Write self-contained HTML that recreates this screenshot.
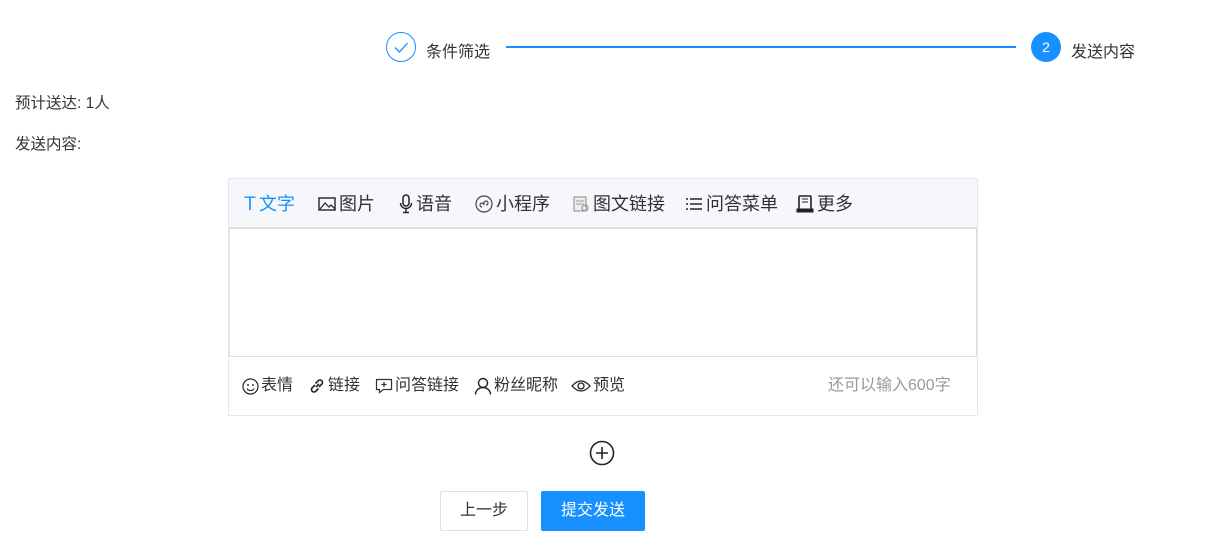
<!DOCTYPE html>
<html><head><meta charset="utf-8"><style>
*{margin:0;padding:0;box-sizing:border-box}
body{width:1212px;height:542px;background:#fff;font-family:"Liberation Sans","Noto Sans CJK SC",sans-serif;color:#333;position:relative;overflow:hidden;font-size:14px}
.a{position:absolute;white-space:nowrap}
.tb span{position:absolute;top:0;height:50px;line-height:50px;font-size:18px;color:#303133;display:flex;align-items:center;gap:3px}
.ft span{position:absolute;top:0;height:58px;line-height:58px;font-size:16px;color:#303133;display:flex;align-items:center;gap:2px}
</style></head><body>
<div class="a" style="left:386px;top:32px;width:30px;height:30px;border:1px solid #1890ff;border-radius:50%"></div>
<svg class="a" style="left:386px;top:32px" width="30" height="30"><path d="M9 15.5l4.5 4.5 8-9" fill="none" stroke="#1890ff" stroke-width="1.3"/></svg>
<div class="a" style="left:426px;top:38px;font-size:16px;color:#333">条件筛选</div>
<div class="a" style="left:506px;top:46px;width:510px;height:2px;background:#1890ff"></div>
<div class="a" style="left:1031px;top:32px;width:30px;height:30px;background:#1890ff;border-radius:50%;color:#fff;text-align:center;line-height:30px;font-size:14px">2</div>
<div class="a" style="left:1071px;top:38px;font-size:16px;color:#333">发送内容</div>
<div class="a" style="left:15px;top:91px;font-size:15.5px">预计送达: 1人</div>
<div class="a" style="left:15px;top:132px;font-size:15.5px">发送内容:</div>

<div class="a" style="left:228px;top:178px;width:750px;height:238px;border:1px solid #e4e7ed"></div>
<div class="a tb" style="left:229px;top:179px;width:748px;height:49px;background:#f5f7fa;border-bottom:1px solid #dcdfe6">
<span style="left:12px;color:#1890ff">Ｔ文字</span>
<span style="left:89px"><svg width="18" height="16"><rect x="1" y="2" width="16" height="12" fill="none" stroke="#222" stroke-width="1.4"/><path d="M2 13l5-6 4 4 2-2 4 4" fill="none" stroke="#222" stroke-width="1.2"/></svg>图片</span>
<span style="left:170px"><svg width="14" height="20"><rect x="4" y="1" width="6" height="11" rx="3" fill="none" stroke="#222" stroke-width="1.5"/><path d="M1.5 9a5.5 5.5 0 0 0 11 0M7 14.5v4M4 18.5h6" fill="none" stroke="#222" stroke-width="1.4"/></svg>语音</span>
<span style="left:246px"><svg width="18" height="18"><circle cx="9" cy="9" r="8" fill="none" stroke="#444" stroke-width="1.2"/><path d="M7 12a2 2 0 1 1 2-2v-2a2 2 0 1 1 2 2" fill="none" stroke="#444" stroke-width="1.2"/></svg>小程序</span>
<span style="left:343px"><svg width="18" height="18"><rect x="2" y="2" width="12" height="14" fill="#eee" stroke="#888"/><path d="M4 6h8M4 9h8" stroke="#999"/><circle cx="13" cy="13" r="3" fill="none" stroke="#888"/></svg>图文链接</span>
<span style="left:456px"><svg width="18" height="16"><path d="M1 3h2M1 8h2M1 13h2M5 3h12M5 8h12M5 13h12" stroke="#222" stroke-width="1.4"/></svg>问答菜单</span>
<span style="left:567px"><svg width="18" height="18"><rect x="3" y="1" width="12" height="14" rx="1" fill="none" stroke="#222" stroke-width="1.6"/><path d="M6 4h6M6 7h6M1 14h16v3H1z" fill="#222" stroke="#222"/></svg>更多</span>
</div>
<div class="a" style="left:229px;top:228px;width:748px;height:129px;border:1px solid #dcdfe6"></div>
<div class="a ft" style="left:229px;top:357px;width:748px;height:58px">
<span style="left:13px"><svg width="17" height="17"><circle cx="8.5" cy="8.5" r="7.5" fill="none" stroke="#222" stroke-width="1.2"/><circle cx="6" cy="7" r=".9"/><circle cx="11" cy="7" r=".9"/><path d="M5 10.5a4 4 0 0 0 7 0" fill="none" stroke="#222" stroke-width="1.2"/></svg>表情</span>
<span style="left:79px"><svg width="18" height="18"><path d="M8 10l3-3M7 8l-3 3a2.5 2.5 0 0 0 3.5 3.5l3-3M11 10l3-3a2.5 2.5 0 0 0-3.5-3.5l-3 3" fill="none" stroke="#222" stroke-width="1.6"/></svg>链接</span>
<span style="left:146px"><svg width="18" height="18"><path d="M1.5 2.5h15v10h-8l-4 3v-3h-3z" fill="none" stroke="#333" stroke-width="1.2"/><path d="M9 5v5M6.5 7.5h5" stroke="#333" stroke-width="1.2"/></svg>问答链接</span>
<span style="left:245px"><svg width="18" height="18"><circle cx="9" cy="6" r="4.5" fill="none" stroke="#222" stroke-width="1.4"/><path d="M1.5 17.5a7.5 7 0 0 1 15 0" fill="none" stroke="#222" stroke-width="1.4"/></svg>粉丝昵称</span>
<span style="left:342px"><svg width="20" height="16"><path d="M1 8q9-10 18 0q-9 10-18 0z" fill="none" stroke="#222" stroke-width="1.3"/><circle cx="10" cy="8" r="3" fill="none" stroke="#222" stroke-width="1.3"/></svg>预览</span>
<span style="left:599px;color:#999">还可以输入600字</span>
</div>
<svg class="a" style="left:589px;top:440px" width="26" height="26"><circle cx="13" cy="13" r="11.5" fill="none" stroke="#222" stroke-width="1.6"/><path d="M13 7v12M7 13h12" stroke="#222" stroke-width="1.6"/></svg>
<div class="a" style="left:440px;top:491px;width:88px;height:40px;border:1px solid #dcdfe6;border-radius:2px;text-align:center;line-height:38px;font-size:16px;color:#333">上一步</div>
<div class="a" style="left:541px;top:491px;width:104px;height:40px;background:#1890ff;border-radius:2px;text-align:center;line-height:40px;font-size:16px;color:#fff">提交发送</div>
</body></html>
